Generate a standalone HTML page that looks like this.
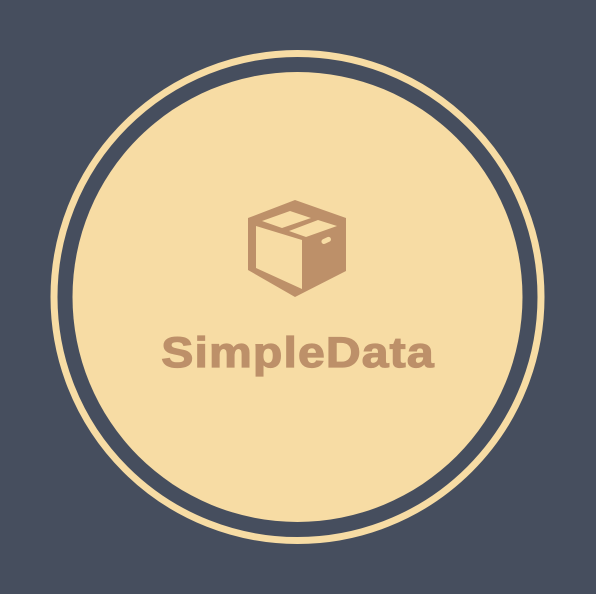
<!DOCTYPE html>
<html><head><style>
html,body{margin:0;padding:0;}
body{width:596px;height:594px;background:#464e5e;position:relative;overflow:hidden;}
.t{position:absolute;left:0;width:596px;top:329px;text-align:center;font:bold 43px "Liberation Sans",sans-serif;color:#bd9069;-webkit-text-stroke:1.2px #bd9069;letter-spacing:1px;transform:scaleX(1.12);transform-origin:298px 0;}
</style></head><body>
<svg width="596" height="594" style="position:absolute;left:0;top:0">
<circle cx="297.5" cy="297" r="243.5" fill="none" stroke="#f7dca4" stroke-width="7"/>
<circle cx="297.5" cy="297" r="225" fill="#f7dca4"/>
<g fill="#bd9069">
<polygon points="295,200 346,218 346,271 295,297 248,270 248,218"/>
</g>
<polygon points="256,226 302,240 302,289 256,268" fill="#f7dca4"/>
<polygon points="262,221 290,211 311,218 282,228" fill="#f7dca4"/>
<polygon points="289,231 318,220 337,226 306,237" fill="#f7dca4"/>
<rect x="321" y="238" width="10" height="5" rx="2.5" transform="rotate(-25 326 240)" fill="#f7dca4"/>
</svg>
<div class="t">SimpleData</div>
</body></html>
